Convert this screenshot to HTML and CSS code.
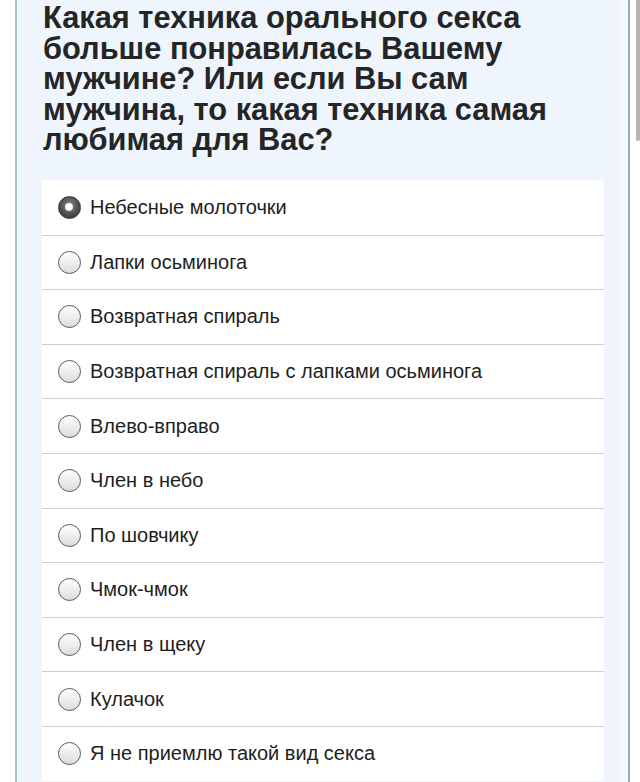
FILE: index.html
```html
<!DOCTYPE html>
<html lang="ru">
<head>
<meta charset="utf-8">
<link rel="stylesheet" href="styles.css">
</head>
<body>
<div class="frame">
  <div class="panel">
    <h1 class="question">Какая техника орального секса больше понравилась Вашему мужчине? Или если Вы сам мужчина, то какая техника самая любимая для Вас?</h1>
    <ul class="options">
      <li class="option"><span class="radio checked"></span><span class="label">Небесные молоточки</span></li>
      <li class="option"><span class="radio"></span><span class="label">Лапки осьминога</span></li>
      <li class="option"><span class="radio"></span><span class="label">Возвратная спираль</span></li>
      <li class="option"><span class="radio"></span><span class="label">Возвратная спираль с лапками осьминога</span></li>
      <li class="option"><span class="radio"></span><span class="label">Влево-вправо</span></li>
      <li class="option"><span class="radio"></span><span class="label">Член в небо</span></li>
      <li class="option"><span class="radio"></span><span class="label">По шовчику</span></li>
      <li class="option"><span class="radio"></span><span class="label">Чмок-чмок</span></li>
      <li class="option"><span class="radio"></span><span class="label">Член в щеку</span></li>
      <li class="option"><span class="radio"></span><span class="label">Кулачок</span></li>
      <li class="option"><span class="radio"></span><span class="label">Я не приемлю такой вид секса</span></li>
    </ul>
  </div>
</div>
<div class="scrollbar"></div>
</body>
</html>
```
FILE: styles.css
```css
html, body {
  margin: 0;
  padding: 0;
  height: 782px;
  overflow: hidden;
  background: #ffffff;
  font-family: "Liberation Sans", Arial, sans-serif;
  color: #222;
}
.frame {
  margin-left: 15px;
  width: 611px;
  height: 782px;
  border-left: 2px solid #a9bfc6;
  border-right: 2px solid #8fb2b4;
  background: #f7fafd;
}
.panel {
  width: 603px;
  height: 782px;
  background: #eef5fd;
  box-sizing: border-box;
}
.question {
  margin: 0;
  padding: 3px 18px 0 26px;
  font-size: 30.8px;
  line-height: 30.6px;
  font-weight: bold;
  color: #252525;
  height: 180px;
  box-sizing: border-box;
}
.options {
  list-style: none;
  margin: 0 0 0 25px;
  padding: 0;
  width: 562px;
  background: #ffffff;
}
.option {
  display: flex;
  align-items: center;
  height: 54.6px;
  box-sizing: border-box;
  border-top: 1.5px solid #cfcfcf;
  padding-left: 16px;
}
.option:first-child {
  border-top: none;
}
.radio {
  width: 23px;
  height: 23px;
  box-sizing: border-box;
  border-radius: 50%;
  border: 1.5px solid #5a5a5a;
  background: linear-gradient(#ffffff, #dcdcdc);
  flex: none;
  margin-right: 9px;
  position: relative;
}
.radio.checked {
  background: radial-gradient(circle at 50% 40%, #8a8a8a 0%, #4a4a4a 60%, #2e2e2e 100%);
  border-color: #3a3a3a;
}
.radio.checked::after {
  content: "";
  position: absolute;
  left: 6px;
  top: 6px;
  width: 8px;
  height: 8px;
  border-radius: 50%;
  background: radial-gradient(circle at 50% 40%, #ffffff 40%, #d0d0d0 100%);
}
.label {
  font-size: 20px;
  color: #1e1e1e;
}
.scrollbar {
  position: absolute;
  left: 636px;
  top: 0;
  width: 4px;
  height: 141px;
  background: #b3b3b3;
  border-radius: 0 0 2px 2px;
}
```
